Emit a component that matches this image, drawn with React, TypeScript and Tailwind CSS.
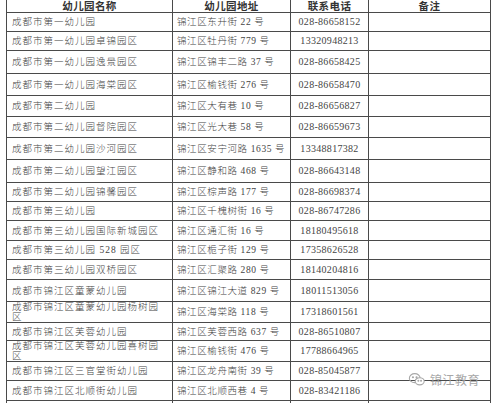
import React from "react";

type Row = { name: React.ReactNode; addr: string; phone: string; h: number };

const rows: Row[] = [
  { name: "成都市第一幼儿园", addr: "锦江区东升街 22 号", phone: "028-86658152", h: 19 },
  { name: "成都市第一幼儿园卓锦园区", addr: "锦江区牡丹街 779 号", phone: "13320948213", h: 19 },
  { name: "成都市第一幼儿园逸景园区", addr: "锦江区锦丰二路 37 号", phone: "028-86658425", h: 23 },
  { name: "成都市第一幼儿园海棠园区", addr: "锦江区榆钱街 276 号", phone: "028-86658470", h: 22 },
  { name: "成都市第二幼儿园", addr: "锦江区大有巷 10 号", phone: "028-86656827", h: 21 },
  { name: "成都市第二幼儿园督院园区", addr: "锦江区光大巷 58 号", phone: "028-86659673", h: 21 },
  { name: "成都市第二幼儿园沙河园区", addr: "锦江区安宁河路 1635 号", phone: "13348817382", h: 22 },
  { name: "成都市第二幼儿园望江园区", addr: "锦江区静和路 468 号", phone: "028-86643148", h: 23 },
  { name: "成都市第二幼儿园锦馨园区", addr: "锦江区棕声路 177 号", phone: "028-86698374", h: 19 },
  { name: "成都市第三幼儿园", addr: "锦江区千槐树街 16 号", phone: "028-86747286", h: 19 },
  { name: "成都市第三幼儿园国际新城园区", addr: "锦江区通汇街 16 号", phone: "18180495618", h: 20 },
  { name: "成都市第三幼儿园 528 园区", addr: "锦江区栀子街 129 号", phone: "17358626528", h: 19 },
  { name: "成都市第三幼儿园双桥园区", addr: "锦江区汇聚路 280 号", phone: "18140204816", h: 20 },
  { name: "成都市锦江区童蒙幼儿园", addr: "锦江区锦江大道 829 号", phone: "18011513056", h: 22 },
  {
    name: (
      <>
        成都市锦江区童蒙幼儿园杨树园
        <br />区
      </>
    ),
    addr: "锦江区海棠路 118 号",
    phone: "17318601561",
    h: 21,
  },
  { name: "成都市锦江区芙蓉幼儿园", addr: "锦江区芙蓉西路 637 号", phone: "028-86510807", h: 18 },
  {
    name: (
      <>
        成都市锦江区芙蓉幼儿园喜树园
        <br />区
      </>
    ),
    addr: "锦江区榆钱街 476 号",
    phone: "17788664965",
    h: 21,
  },
  { name: "成都市锦江区三官堂街幼儿园", addr: "锦江区龙舟南街 39 号", phone: "028-85045877", h: 19 },
  { name: "成都市锦江区北顺街幼儿园", addr: "锦江区北顺西巷 4 号", phone: "028-83421186", h: 20 },
  { name: "", addr: "", phone: "", h: 20 },
];

const cell = "border border-[#4a4a4a] p-0 align-middle";

export default function App() {
  return (
    <div
      className="relative h-[403px] w-[492px] overflow-hidden bg-white pl-[6px] text-[#444444]"
      style={{ fontFamily: '"Liberation Serif", "Noto Sans CJK SC", serif' }}
    >
      <table className="-mt-px w-[484px] table-fixed border-collapse">
        <colgroup>
          <col className="w-[166px]" />
          <col className="w-[118px]" />
          <col className="w-[78px]" />
          <col className="w-[122px]" />
        </colgroup>
        <thead>
          <tr className="h-[13px] text-[10.5px] font-semibold leading-[11px] tracking-[0.4px] text-[#333333]">
            <th className={`${cell} text-center`}>幼儿园名称</th>
            <th className={`${cell} text-center`}>幼儿园地址</th>
            <th className={`${cell} text-center`}>联系电话</th>
            <th className={`${cell} text-center`}>备注</th>
          </tr>
        </thead>
        <tbody>
          {rows.map((r, i) => (
            <tr key={i} style={{ height: r.h }} className="text-[9.5px] font-light leading-[10px]">
              <td className={`${cell} pl-[5px] tracking-[1px]`}>{r.name}</td>
              <td className={`${cell} whitespace-nowrap pl-[4px] tracking-[0.6px]`}>{r.addr}</td>
              <td className={`${cell} text-center text-[10px] tracking-[0.3px]`}>{r.phone}</td>
              <td className={cell}></td>
            </tr>
          ))}
        </tbody>
      </table>

      {/* watermark */}
      <div className="absolute left-[408px] top-[372px] flex items-center gap-[4px] text-[#a8a8a8]">
        <svg width="18" height="15" viewBox="0 0 20 16" fill="none" stroke="currentColor" strokeWidth="1.2">
          <ellipse cx="7.5" cy="6.5" rx="6" ry="5" />
          <ellipse cx="13" cy="10" rx="5" ry="4" fill="white" />
          <circle cx="5.5" cy="5.5" r="0.6" fill="currentColor" />
          <circle cx="9.5" cy="5.5" r="0.6" fill="currentColor" />
          <circle cx="11.5" cy="9.5" r="0.5" fill="currentColor" />
          <circle cx="14.5" cy="9.5" r="0.5" fill="currentColor" />
        </svg>
        <span
          className="text-[12px] leading-none tracking-[0.5px]"
          style={{ fontFamily: '"Noto Sans CJK SC", sans-serif' }}
        >
          锦江教育
        </span>
      </div>
    </div>
  );
}
